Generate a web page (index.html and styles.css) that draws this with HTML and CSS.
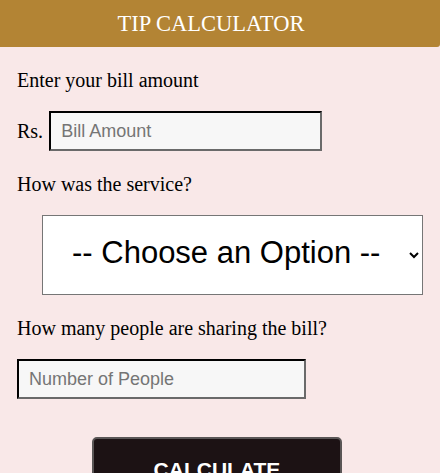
FILE: index.html
```html
<!DOCTYPE html>
<html>
<head>
<meta charset="utf-8">
<link rel="stylesheet" href="styles.css">
</head>
<body>
<div class="app">
  <header class="header">TIP CALCULATOR</header>
  <main class="content">
    <p class="label label-bill">Enter your bill amount</p>
    <div class="bill-row">
      <span class="currency">Rs.</span>
      <input class="field field-bill" type="text" placeholder="Bill Amount">
    </div>
    <p class="label label-service">How was the service?</p>
    <div class="select-wrap">
      <select class="service">
        <option>-- Choose an Option --</option>
        <option>30% - Outstanding</option>
        <option>20% - Good</option>
        <option>15% - It was OK</option>
        <option>10% - Bad</option>
        <option>5% - Terrible</option>
      </select>
    </div>
    <p class="label label-people">How many people are sharing the bill?</p>
    <input class="field field-people" type="text" placeholder="Number of People">
    <div class="btn-wrap">
      <button class="calc">CALCULATE</button>
    </div>
  </main>
</div>
</body>
</html>
```
FILE: styles.css
```css
html, body {
  margin: 0;
  padding: 0;
  background: #f9e8e8;
  overflow: hidden;
}
body {
  font-family: "Liberation Serif", "Times New Roman", serif;
  color: #000;
}
.header {
  height: 47px;
  line-height: 47px;
  background: #b38434;
  color: #fff;
  font-size: 22.5px;
  text-align: center;
  padding-right: 18px;
  border-bottom-right-radius: 3px;
}
.content {
  padding: 0 0 0 17px;
}
.label {
  margin: 0;
  font-size: 20px;
  line-height: 21px;
}
.label-bill {
  padding-top: 23px;
}
.bill-row {
  display: flex;
  align-items: center;
  gap: 6px;
  margin-top: 20px;
}
.currency {
  font-size: 20px;
  line-height: 21px;
  padding-top: 1px;
}
.field {
  box-sizing: border-box;
  height: 40px;
  border: 2px inset #767676;
  border-top-color: #222;
  border-left-color: #222;
  border-right-color: #6a6a6a;
  border-bottom-color: #6a6a6a;
  background: #f7f7f7;
  font-family: "Liberation Sans", Arial, sans-serif;
  font-size: 18px;
  padding: 0 10px;
  margin: 0;
  outline: none;
}
.field::placeholder {
  color: #757575;
}
.field-bill {
  width: 273px;
}
.label-service {
  margin-top: 23px;
}
.select-wrap {
  margin-top: 20px;
  padding-left: 25px;
}
.service {
  box-sizing: border-box;
  width: 381px;
  height: 80px;
  background: #fff;
  border: 1px solid #767676;
  border-radius: 0;
  font-family: "Liberation Sans", Arial, sans-serif;
  font-size: 31px;
  color: #000;
  padding: 0 0 6px 25px;
  margin: 0;
}
.label-people {
  margin-top: 23px;
}
.field-people {
  display: block;
  width: 289px;
  margin-top: 20px;
}
.btn-wrap {
  margin-top: 38px;
  padding-left: 75px;
}
.calc {
  box-sizing: border-box;
  width: 250px;
  height: 60px;
  background: #1c1214;
  border: 2px solid #5a5656;
  border-radius: 5px;
  color: #fff;
  font-family: "Liberation Sans", Arial, sans-serif;
  font-weight: bold;
  font-size: 21px;
  padding: 6px 0 0;
  margin: 0;
  text-align: center;
  vertical-align: top;
}
```
